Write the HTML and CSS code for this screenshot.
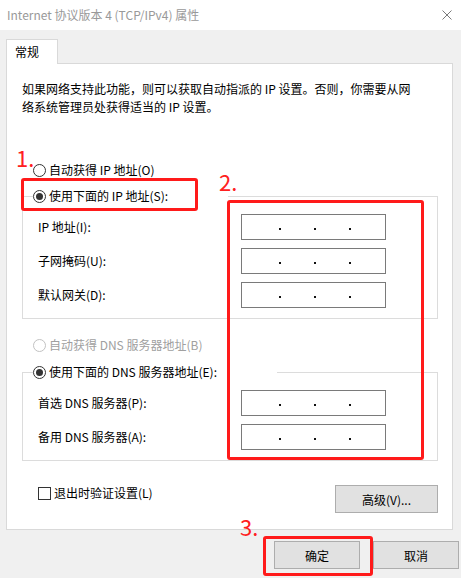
FILE: index.html
```html
<!DOCTYPE html>
<html lang="zh-CN">

<head>
    <meta charset="UTF-8">
    <title>Internet 协议版本 4 (TCP/IPv4) 属性</title>
    <link rel="stylesheet" href="styles.css">
</head>

<body>

    <div class="window">

        <div class="titlebar">
            <span class="title">Internet 协议版本 4 (TCP/IPv4) 属性</span>
            <svg class="close" width="10" height="10" viewBox="0 0 10 10">
                <path d="M0.5 0.5 L9.5 9.5 M9.5 0.5 L0.5 9.5" stroke="#7a7a7a" stroke-width="1" fill="none" />
            </svg>
        </div>

        <div class="body">

            <div class="tab">常规</div>

            <div class="panel">

                <p class="intro">如果网络支持此功能，则可以获取自动指派的 IP 设置。否则，你需要从网<br>络系统管理员处获得适当的 IP 设置。</p>

                <!-- IP address -->
                <div class="radio first">
                    <span class="dot"></span>
                    <span>自动获得 IP 地址(O)</span>
                </div>

                <fieldset class="group">
                    <legend>
                        <span class="radio">
                            <span class="dot checked"></span>
                            <span>使用下面的 IP 地址(S):</span>
                        </span>
                    </legend>
                    <div class="rows">
                        <span class="label">IP 地址(I):</span>
                        <div class="ipbox"><i></i><i></i><i></i></div>
                        <span class="label">子网掩码(U):</span>
                        <div class="ipbox"><i></i><i></i><i></i></div>
                        <span class="label">默认网关(D):</span>
                        <div class="ipbox"><i></i><i></i><i></i></div>
                    </div>
                </fieldset>

                <!-- DNS -->
                <div class="radio disabled">
                    <span class="dot"></span>
                    <span>自动获得 DNS 服务器地址(B)</span>
                </div>

                <fieldset class="group dns">
                    <legend>
                        <span class="radio">
                            <span class="dot checked"></span>
                            <span>使用下面的 DNS 服务器地址(E):</span>
                        </span>
                    </legend>
                    <div class="rows">
                        <span class="label">首选 DNS 服务器(P):</span>
                        <div class="ipbox"><i></i><i></i><i></i></div>
                        <span class="label">备用 DNS 服务器(A):</span>
                        <div class="ipbox"><i></i><i></i><i></i></div>
                    </div>
                </fieldset>

                <div class="bottom">
                    <div class="check">
                        <span class="box"></span>
                        <span>退出时验证设置(L)</span>
                    </div>
                    <button class="btn advanced">高级(V)...</button>
                </div>

            </div>

            <div class="footer">
                <button class="btn">确定</button>
                <button class="btn">取消</button>
            </div>

        </div>

        <!-- red annotations -->
        <span class="num n1">1.</span>
        <span class="mark m1"></span>
        <span class="num n2">2.</span>
        <span class="mark m2"></span>
        <span class="num n3">3.</span>
        <span class="mark m3"></span>

    </div>

</body>

</html>
```

FILE: styles.css
```css
body {
    margin: 0;
    padding: 0;
    font-family: "Noto Sans CJK SC", "Noto Sans", sans-serif;
    font-size: 12px;
    color: #000;
    background-color: #f0f0f0;
}

.window {
    position: relative;
    width: 461px;
    height: 578px;
    background-color: #f0f0f0;
    overflow: hidden;
}

.titlebar {
    height: 30px;
    background-color: #fff;
    display: flex;
    align-items: center;
    justify-content: space-between;
    padding: 0 9px 0 7px;
}

.title {
    color: #999;
    font-size: 12px;
    line-height: 16px;
}

.close {
    display: block;
    margin-top: -1px;
}

.body {
    padding: 9px 0 0 6px;
}

.tab {
    position: relative;
    z-index: 1;
    width: 52px;
    height: 25px;
    box-sizing: border-box;
    margin-bottom: -1px;
    padding: 3px 0 0 8px;
    line-height: 18px;
    background-color: #fff;
    border: 1px solid #d9d9d9;
    border-bottom: none;
}

.panel {
    width: 447px;
    box-sizing: border-box;
    background-color: #fff;
    border: 1px solid #d9d9d9;
    padding: 16px 14px 16px 15px;
}

.intro {
    margin: 0;
    line-height: 18px;
    white-space: nowrap;
}

.radio {
    display: flex;
    align-items: center;
    gap: 3px;
    height: 20px;
    line-height: 20px;
    white-space: nowrap;
}

.radio.first {
    margin: 44px 0 0 11px;
}

.radio.disabled {
    margin: 16px 0 0 11px;
    color: #a0a0a0;
}

.dot {
    position: relative;
    width: 13px;
    height: 13px;
    box-sizing: border-box;
    border: 1px solid #333;
    border-radius: 50%;
    background-color: #fff;
}

.disabled .dot {
    border-color: #c2c2c2;
}

.dot.checked::after {
    content: "";
    position: absolute;
    left: 2px;
    top: 2px;
    width: 7px;
    height: 7px;
    border-radius: 50%;
    background-color: #333;
}

.group {
    margin: 6px 0 0 0;
    padding: 0;
    border: 1px solid #dcdcdc;
    min-width: 0;
}

.group.dns {
    margin-top: 7px;
}

.group legend {
    margin-left: 10px;
    padding: 0 60px 0 0;
    height: 20px;
}

.rows {
    display: grid;
    grid-template-columns: 203px 145px;
    row-gap: 8px;
    align-items: center;
    padding: 8px 0 10px 15px;
}

.label {
    line-height: 18px;
}

.ipbox {
    height: 26px;
    box-sizing: border-box;
    border: 1px solid #7a7a7a;
    background-color: #fff;
    display: flex;
    align-items: center;
    gap: 33px;
    padding: 3px 0 0 37px;
}

.ipbox i {
    width: 2px;
    height: 2px;
    background-color: #111;
}

.bottom {
    display: flex;
    justify-content: space-between;
    align-items: flex-start;
    margin-top: 23px;
    padding-left: 16px;
}

.check {
    display: flex;
    align-items: center;
    gap: 3px;
    height: 18px;
    line-height: 18px;
}

.box {
    width: 13px;
    height: 13px;
    box-sizing: border-box;
    border: 1px solid #333;
    background-color: #fff;
}

.btn {
    width: 86px;
    height: 28px;
    padding: 0;
    font-family: inherit;
    font-size: 12px;
    color: #000;
    background-color: #e1e1e1;
    border: 1px solid #adadad;
    border-radius: 0;
}

.btn.advanced {
    width: 103px;
    margin-top: 1px;
}

.footer {
    display: flex;
    justify-content: flex-end;
    gap: 13px;
    margin-top: 11px;
    padding-right: 2px;
}

/* red annotations drawn on top of the dialog */
.num {
    position: absolute;
    color: #ff2020;
    font-size: 22px;
    line-height: 22px;
}

.n1 {
    left: 16px;
    top: 146px;
}

.n2 {
    left: 219px;
    top: 170px;
}

.n3 {
    left: 240px;
    top: 515px;
}

.mark {
    position: absolute;
    box-sizing: border-box;
    border: 3px solid #ff1a1a;
    border-radius: 3px;
}

.m1 {
    left: 21px;
    top: 178px;
    width: 177px;
    height: 33px;
}

.m2 {
    left: 227px;
    top: 200px;
    width: 197px;
    height: 260px;
}

.m3 {
    left: 263px;
    top: 536px;
    width: 110px;
    height: 40px;
}
```
